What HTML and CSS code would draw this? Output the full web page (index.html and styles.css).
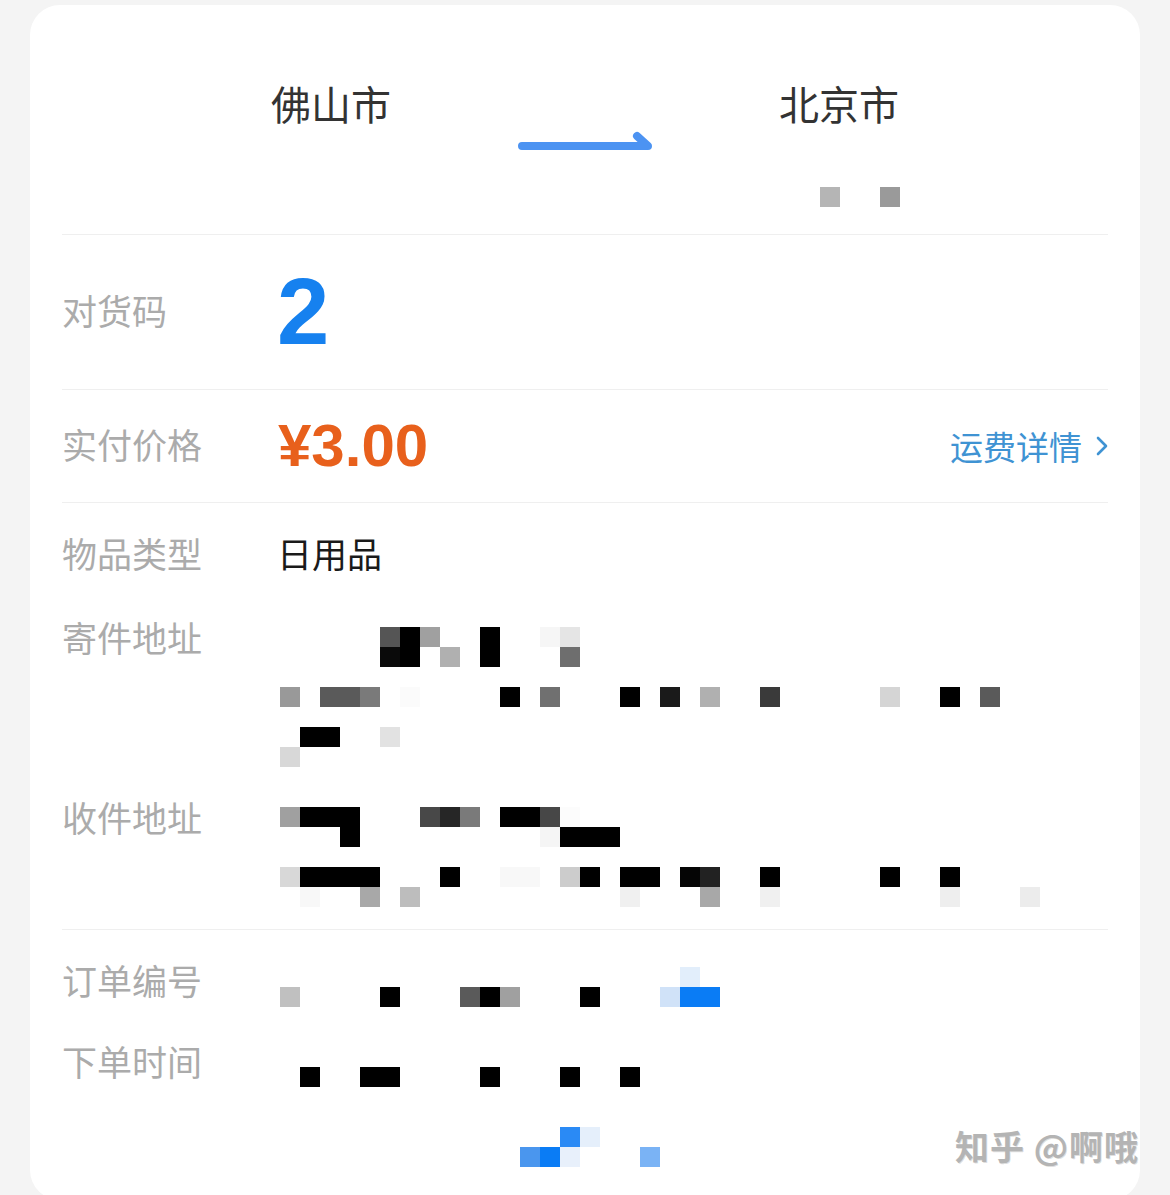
FILE: index.html
```html
<!doctype html>
<html>
  <head>
    <title>订单详情</title>
    <meta charset="utf-8">
    <meta name="viewport" content="width=device-width, initial-scale=1">
    <link rel="stylesheet" href="styles.css">
  </head>

  <body>
    <div class="card">
      <section class="route">
        <div class="route-cities">
          <div class="city">佛山市</div>
          <div class="route-arrow">
            <svg width="140" height="24" viewBox="0 0 140 24">
              <path d="M7 16 H133 L122 6" fill="none" stroke="#4c93f2" stroke-width="8" stroke-linecap="round" stroke-linejoin="round"/>
            </svg>
          </div>
          <div class="city">北京市</div>
        </div>
        <div class="mosaic route-mosaic" data-set="route"></div>
      </section>

      <div class="divider"></div>

      <section class="line code-line">
        <span class="label">对货码</span>
        <span class="code">2</span>
      </section>

      <div class="divider"></div>

      <section class="line price-line">
        <span class="label">实付价格</span>
        <span class="price">¥3.00</span>
        <a class="fee-link">运费详情
          <svg width="12" height="22" viewBox="0 0 12 22"><path d="M2 3 L10 11 L2 19" fill="none" stroke="#3f93d3" stroke-width="2.6" stroke-linecap="round" stroke-linejoin="round"/></svg>
        </a>
      </section>

      <div class="divider"></div>

      <section class="details">
        <div class="row row-kind">
          <span class="label">物品类型</span>
          <span class="value">日用品</span>
        </div>
        <div class="row row-sender">
          <span class="label">寄件地址</span>
          <div class="mosaic" data-set="sender"></div>
        </div>
        <div class="row row-receiver">
          <span class="label">收件地址</span>
          <div class="mosaic" data-set="receiver"></div>
        </div>
      </section>

      <div class="divider divider-details"></div>

      <section class="details details-order">
        <div class="row row-order">
          <span class="label">订单编号</span>
          <div class="mosaic" data-set="order"></div>
        </div>
        <div class="row row-time">
          <span class="label">下单时间</span>
          <div class="mosaic" data-set="time"></div>
        </div>
        <div class="row row-extra">
          <span></span>
          <div class="mosaic" data-set="extra"></div>
        </div>
      </section>
    </div>

    <div class="watermark">知乎 @啊哦</div>

    <script>
      // blurred blocks: [row, column, colour] on a 20px grid
      const mosaics = {
        route: [[0,27,'#b5b5b5'],[0,30,'#9a9a9a']],
        sender: [
          [0,5,'#555'],[0,6,'#000'],[0,7,'#a0a0a0'],[0,10,'#000'],[0,13,'#f6f6f6'],[0,14,'#e5e5e5'],
          [1,5,'#0a0a0a'],[1,6,'#000'],[1,8,'#b0b0b0'],[1,10,'#000'],[1,14,'#6e6e6e'],
          [3,0,'#999'],[3,2,'#5a5a5a'],[3,3,'#5a5a5a'],[3,4,'#7a7a7a'],[3,6,'#fbfbfb'],[3,11,'#000'],[3,13,'#707070'],
          [3,17,'#000'],[3,19,'#1a1a1a'],[3,21,'#b0b0b0'],[3,24,'#3a3a3a'],[3,30,'#d5d5d5'],[3,33,'#000'],[3,35,'#5a5a5a'],
          [5,1,'#000'],[5,2,'#000'],[5,5,'#e2e2e2'],
          [6,0,'#d8d8d8']
        ],
        receiver: [
          [0,0,'#a0a0a0'],[0,1,'#000'],[0,2,'#000'],[0,3,'#000'],[0,7,'#484848'],[0,8,'#262626'],[0,9,'#7a7a7a'],
          [0,11,'#000'],[0,12,'#000'],[0,13,'#474747'],[0,14,'#fcfcfc'],
          [1,3,'#000'],[1,13,'#f5f5f5'],[1,14,'#000'],[1,15,'#000'],[1,16,'#000'],
          [3,0,'#d8d8d8'],[3,1,'#000'],[3,2,'#000'],[3,3,'#000'],[3,4,'#000'],[3,8,'#000'],[3,11,'#f8f8f8'],[3,12,'#f8f8f8'],
          [3,14,'#ccc'],[3,15,'#000'],[3,17,'#000'],[3,18,'#000'],[3,20,'#050505'],[3,21,'#222'],[3,24,'#000'],[3,30,'#000'],[3,33,'#000'],
          [4,1,'#f8f8f8'],[4,4,'#a8a8a8'],[4,6,'#bdbdbd'],[4,17,'#f0f0f0'],[4,21,'#a8a8a8'],[4,24,'#f0f0f0'],[4,33,'#eee'],[4,37,'#ececec']
        ],
        order: [
          [0,20,'#e2eefb'],
          [1,0,'#c0c0c0'],[1,5,'#000'],[1,9,'#5a5a5a'],[1,10,'#000'],[1,11,'#a0a0a0'],[1,15,'#000'],
          [1,19,'#d0e2f8'],[1,20,'#0a7cf5'],[1,21,'#0a7cf5']
        ],
        time: [[0,1,'#000'],[0,4,'#000'],[0,5,'#000'],[0,10,'#000'],[0,14,'#000'],[0,17,'#000']],
        extra: [
          [0,14,'#2a8af5'],[0,15,'#e5effb'],
          [1,12,'#4a96ee'],[1,13,'#0a7cf5'],[1,14,'#e8f0fb'],[1,18,'#7ab3f5']
        ]
      };
      document.querySelectorAll('.mosaic').forEach(function(el) {
        mosaics[el.dataset.set].forEach(function(cellData) {
          const cell = document.createElement('span');
          cell.style.gridRow = cellData[0] + 1;
          cell.style.gridColumn = cellData[1] + 1;
          cell.style.background = cellData[2];
          el.appendChild(cell);
        });
      });
    </script>
  </body>
</html>
```

FILE: styles.css
```css
html, body {
  height: 1195px;
  overflow: hidden;
}
body {
  margin: 0;
  position: relative;
  background: #f4f4f4;
  font-family: "Noto Sans CJK SC", "Noto Sans", sans-serif;
}
.card {
  margin: 5px 30px 0;
  width: 1110px;
  height: 1195px;
  background: #fff;
  border-radius: 30px;
}
.route {
  padding: 78px 0 27px;
}
.route-cities {
  display: grid;
  grid-template-columns: 200px 308px 200px;
  justify-content: center;
}
.city {
  text-align: center;
  font-size: 40px;
  line-height: 40px;
  color: #333;
}
.route-arrow {
  padding-top: 47px;
}
.route-arrow svg {
  display: block;
  margin: 0 auto;
}
.route-mosaic {
  margin: 33px 0 0 250px;
}
.divider {
  height: 1px;
  margin: 0 32px;
  background: #efefef;
}
.divider-details {
  margin-top: 22px;
}
.line {
  display: flex;
  align-items: center;
  padding: 0 32px;
}
.label {
  flex: 0 0 218px;
  font-size: 35px;
  line-height: 40px;
  color: #ababab;
}
.line .label {
  margin-bottom: 5px;
}
.code-line {
  height: 154px;
}
.code {
  margin-left: -3px;
  font-family: "Liberation Sans", Arial, sans-serif;
  font-weight: bold;
  font-size: 94px;
  line-height: 1;
  color: #1681ef;
}
.price-line {
  height: 112px;
}
.price {
  margin-left: -2px;
  font-family: "Liberation Sans", Arial, sans-serif;
  font-weight: bold;
  font-size: 60px;
  line-height: 1;
  color: #e8601c;
}
.fee-link {
  margin-left: auto;
  display: flex;
  align-items: center;
  gap: 14px;
  font-size: 33px;
  line-height: 40px;
  color: #3f93d3;
}
.details {
  padding: 30px 32px 0;
}
.row {
  display: grid;
  grid-template-columns: 218px 1fr;
  align-items: start;
}
.value {
  margin-left: -3px;
  font-size: 35px;
  line-height: 40px;
  color: #1a1a1a;
}
.mosaic {
  display: grid;
  grid-auto-columns: 20px;
  grid-auto-rows: 20px;
}
.row-sender {
  margin-top: 44px;
}
.row-sender .mosaic,
.row-receiver .mosaic {
  margin-top: 10px;
}
.row-receiver {
  margin-top: 30px;
}
.row-order .mosaic {
  margin-top: 7px;
}
.row-time {
  margin-top: 34px;
}
.row-time .mosaic {
  margin-top: 26px;
}
.row-extra {
  margin-top: 40px;
}
.watermark {
  position: absolute;
  left: 955px;
  top: 1126px;
  font-size: 34px;
  line-height: 40px;
  letter-spacing: 1px;
  font-weight: bold;
  color: #b4b4b4;
  text-shadow: 1px 1px 0 rgba(0, 0, 0, 0.12);
  white-space: nowrap;
}
```
